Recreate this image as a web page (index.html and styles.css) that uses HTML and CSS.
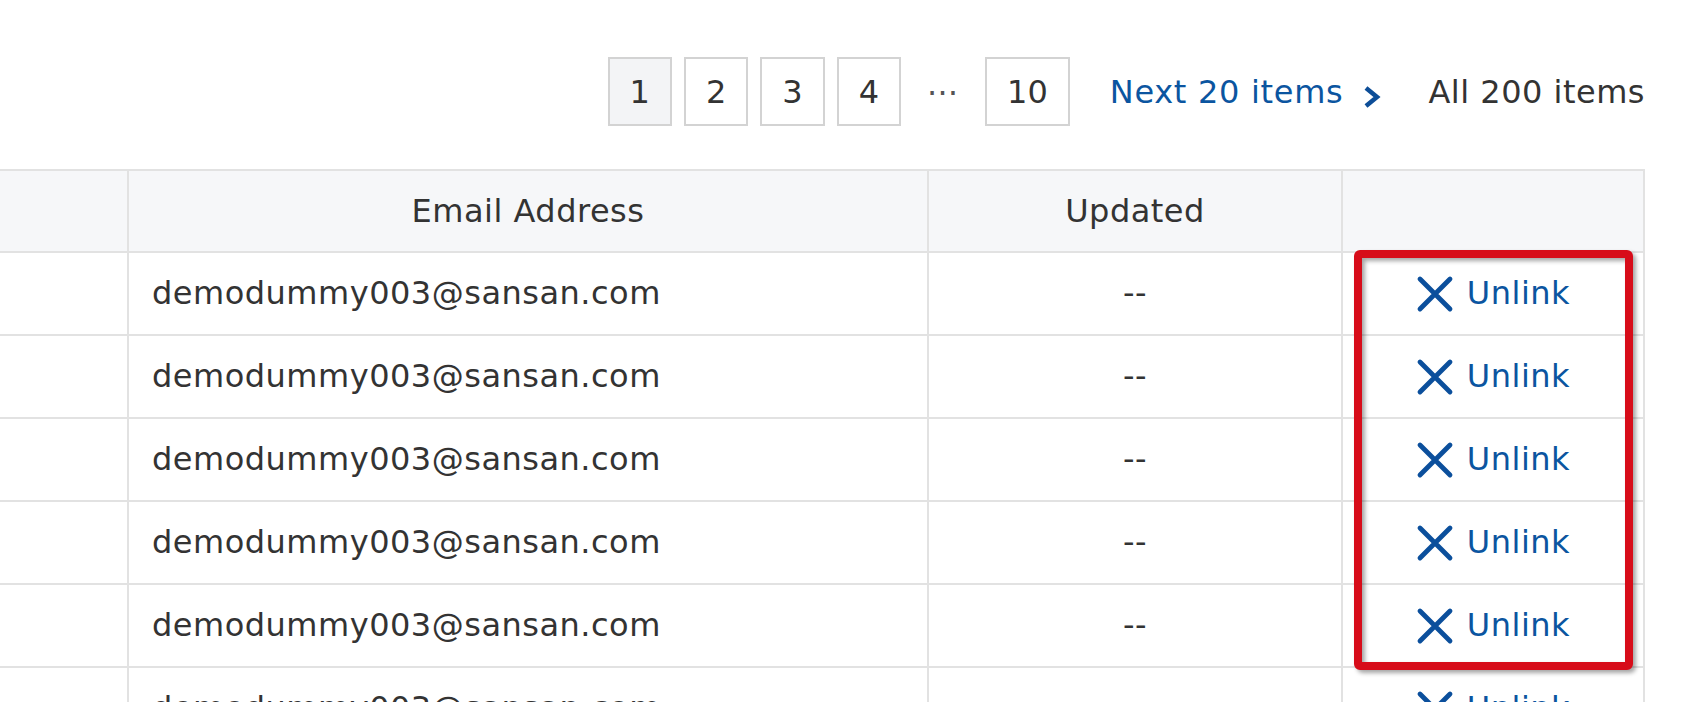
FILE: index.html
```html
<!DOCTYPE html>
<html lang="en">
<head>
    <meta charset="UTF-8">
    <title>Linked Accounts</title>
    <link rel="stylesheet" href="styles.css">
</head>
<body>
    <div class="page">
        <div class="pager">
            <div class="pages">
                <span class="page-btn current">1</span>
                <a class="page-btn" href="#">2</a>
                <a class="page-btn" href="#">3</a>
                <a class="page-btn" href="#">4</a>
                <span class="page-gap">⋯</span>
                <a class="page-btn" href="#">10</a>
            </div>
            <a class="next-link" href="#">Next 20 items
                <svg class="chevron" width="18" height="22" viewBox="0 0 18 22"><polyline points="3,2 14,11 3,20" fill="none" stroke="currentColor" stroke-width="4.5"/></svg>
            </a>
            <span class="total">All 200 items</span>
        </div>

        <div class="table-wrap">
            <table class="accounts">
                <colgroup>
                    <col class="col-name">
                    <col class="col-email">
                    <col class="col-updated">
                    <col class="col-action">
                </colgroup>
                <thead>
                    <tr>
                        <th></th>
                        <th>Email Address</th>
                        <th>Updated</th>
                        <th></th>
                    </tr>
                </thead>
                <tbody id="rows"></tbody>
            </table>
            <div class="highlight"></div>
        </div>
    </div>

    <script>
        const rows = document.getElementById('rows');
        for (let i = 0; i < 6; i++) {
            const tr = document.createElement('tr');
            tr.innerHTML = `
                <td></td>
                <td class="email">demodummy003@sansan.com</td>
                <td class="updated">--</td>
                <td class="action">
                    <a class="unlink" href="#">
                        <svg width="38" height="38" viewBox="0 0 38 38"><path d="M4 4 L34 34 M34 4 L4 34" stroke="currentColor" stroke-width="4.8" stroke-linecap="round"/></svg>
                        Unlink
                    </a>
                </td>
            `;
            rows.appendChild(tr);
        }
    </script>
</body>
</html>
```

FILE: styles.css
```css
body {
    margin: 0;
    font-family: "DejaVu Sans", sans-serif;
    font-size: 32px;
    letter-spacing: 0.5px;
    color: #333;
    background: #fff;
    overflow: hidden;
}
a {
    text-decoration: none;
}
.page {
    padding-right: 43px;
}
.pager {
    display: flex;
    justify-content: flex-end;
    align-items: center;
    padding-top: 57px;
    height: 69px;
}
.pages {
    display: flex;
    align-items: center;
    gap: 12px;
}
.page-btn {
    box-sizing: border-box;
    height: 69px;
    min-width: 63px;
    padding: 0 20px;
    border: 2px solid #d3d3d3;
    display: flex;
    align-items: center;
    justify-content: center;
    color: #333;
    background: #fff;
    letter-spacing: 0;
}
.page-btn.current {
    background: #f3f4f6;
}
.page-gap {
    width: 60px;
    text-align: center;
    color: #555;
}
.next-link {
    margin-left: 40px;
    display: flex;
    align-items: center;
    gap: 20px;
    color: #0b55a0;
    letter-spacing: 0.7px;
}
.chevron {
    margin-top: 10px;
    color: #0d4e98;
}
.total {
    margin-left: 47px;
}
.table-wrap {
    position: relative;
    margin-top: 43px;
}
.accounts {
    width: 100%;
    table-layout: fixed;
    border-spacing: 0;
}
.col-name {
    width: 129px;
}
.col-email {
    width: 800px;
}
.col-updated {
    width: 414px;
}
th, td {
    padding: 0;
    border-right: 2px solid #e2e2e2;
    border-bottom: 2px solid #e2e2e2;
    white-space: nowrap;
}
th {
    border-top: 2px solid #e2e2e2;
    background: #f6f7f9;
    font-weight: normal;
    line-height: 80px;
    text-align: center;
}
td {
    height: 81px;
    line-height: 81px;
    vertical-align: middle;
}
td.email {
    padding-left: 23px;
}
td.updated {
    text-align: center;
}
td.action {
    text-align: center;
}
.unlink {
    display: inline-flex;
    align-items: center;
    vertical-align: top;
    height: 81px;
    gap: 13px;
    color: #0b55a0;
}
.unlink svg {
    color: #0b4f9c;
}
.highlight {
    position: absolute;
    left: 1354px;
    top: 81px;
    width: 279px;
    height: 420px;
    box-sizing: border-box;
    border: 8px solid #d70c19;
    border-radius: 6px;
    filter: drop-shadow(3px 3px 2px rgba(0, 0, 0, 0.35));
}
```
